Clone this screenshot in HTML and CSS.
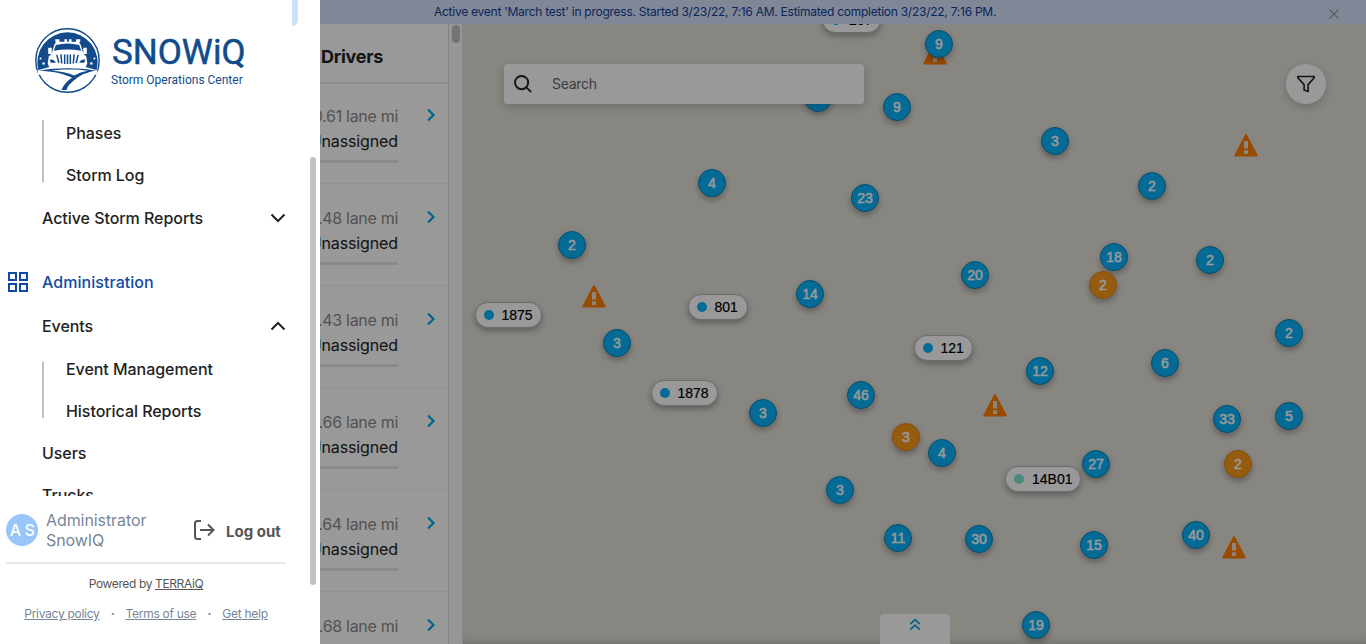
FILE: index.html
```html
<!DOCTYPE html>
<html lang="en">
<head>
<meta charset="utf-8">
<title>SNOWiQ</title>
<link rel="stylesheet" href="styles.css">
</head>
<body>
<svg width="0" height="0" class="defs">
  <symbol id="chev" viewBox="0 0 10 14"><path d="M2 1.500l5.500 5.500-5.500 5.500" fill="none" stroke="#00a5e5" stroke-width="2.200"/></symbol>
  <symbol id="warn" viewBox="0 0 24 23"><path d="M12 1.3L22.6 21.4H1.4z" fill="#ff7d00" stroke="#ff7d00" stroke-width="2.2" stroke-linejoin="round"/><path d="M10 7h4v7.6h-4zM10 16.2h4v3.8h-4z" fill="#e4e1d9"/></symbol>
</svg>
<div class="app">
  <header class="banner"><span>Active event 'March test' in progress. Started 3/23/22, 7:16 AM. Estimated completion 3/23/22, 7:16 PM.</span>
    <svg class="close" width="12" height="12" viewBox="0 0 12 12"><path d="M1.5 1.5l9 9m0-9l-9 9" stroke="#a5a39f" stroke-width="1.6"/></svg>
  </header>
  <div class="body">
    <section class="drivers">
      <h2>Drivers</h2>
      <div class="row first"><div class="info"><p class="mi">0.61 lane mi</p><p>Unassigned</p><i></i></div><svg width="10" height="14"><use href="#chev"/></svg></div>
      <div class="row"><div class="info"><p class="mi">0.48 lane mi</p><p>Unassigned</p><i></i></div><svg width="10" height="14"><use href="#chev"/></svg></div>
      <div class="row"><div class="info"><p class="mi">0.43 lane mi</p><p>Unassigned</p><i></i></div><svg width="10" height="14"><use href="#chev"/></svg></div>
      <div class="row"><div class="info"><p class="mi">0.66 lane mi</p><p>Unassigned</p><i></i></div><svg width="10" height="14"><use href="#chev"/></svg></div>
      <div class="row"><div class="info"><p class="mi">0.64 lane mi</p><p>Unassigned</p><i></i></div><svg width="10" height="14"><use href="#chev"/></svg></div>
      <div class="row"><div class="info"><p class="mi">0.68 lane mi</p></div><svg width="10" height="14"><use href="#chev"/></svg></div>
    </section>
    <div class="track"><div class="thumb"></div></div>
    <main class="map" id="map">
      <div class="search"><svg width="20" height="20" viewBox="0 0 20 20" fill="none" stroke="#222" stroke-width="1.9" stroke-linecap="round"><circle cx="8.6" cy="8.6" r="6.6"/><path d="M13.4 13.4l4.2 4.2"/></svg><span>Search</span></div>
      <div class="filter"><svg width="20" height="20" viewBox="0 0 20 20" fill="none" stroke="#222" stroke-width="1.6" stroke-linejoin="round"><path d="M1.8 2.5h16.4v1.2L12.1 10.6v7l-4-1.5v-5.500L1.8 3.7z"/></svg></div>
      <div class="tab"><svg width="12" height="13" viewBox="0 0 12 13" fill="none" stroke="#00a5e5" stroke-width="1.7"><path d="M1.3 6.2L6 1.6l4.7 4.6M1.3 11.7L6 7.1l4.7 4.6"/></svg></div>
    </main>
  </div>
</div>
<div class="overlay"></div>
<aside class="side">
  <div class="handle"></div>
  <div class="brand">
    <svg width="65" height="65" viewBox="0 0 64 64">
      <circle cx="32" cy="32" r="31.2" fill="#fff" stroke="#114b8b" stroke-width="1.4"/>
      <path d="M3.400 41.500A29.600 29.600 0 1 1 60.600 41.500z" fill="#114b8b"/>
      <path d="M19 16.500L21 13.500H43L45 16.500L47.500 25L50.500 28L51.500 35L50 38.500H14L12.500 35L13.500 28L16.500 25z" fill="#fff"/>
      <path d="M13 19.500h3.500v6H13zM47.500 19.500H51v6h-3.500zM20 11h4v3h-4zM29 11h2.500v3H29zM33.500 11H36v3h-2.500zM40.500 11h4v3h-4z" fill="#fff"/>
      <path d="M20.500 16.800Q32 13.800 43.500 16.800L45.500 22.300Q32 20 18.500 22.300z" fill="#114b8b"/>
      <path d="M21.500 26.500l2 8M25.500 26l.8 9M29.200 26v9.500M32 26v9.500M34.800 26v9.500M38.500 26l-.8 9M42.500 26.500l-2 8" stroke="#114b8b" stroke-width="1.500"/>
      <path d="M14.500 31.300q4-1 6 3h-5zM49.500 31.300q-4-1-6 3h5z" fill="#114b8b"/>
      <circle cx="5.500" cy="30" r="1" fill="#fff"/><circle cx="8.500" cy="35" r="1.200" fill="#fff"/><circle cx="58.500" cy="30" r="1" fill="#fff"/><circle cx="55.500" cy="35" r="1.200" fill="#fff"/>
      <path d="M2.500 41.800C13 38.500 20 37 32 37S51 38.500 61.500 41.800V46H2.500z" fill="#fff"/>
      <path d="M4 42C22 39 42 39 60 42C51 43.500 45 46 41 49.500C36 53.500 32.500 56 31 61H26C28.500 55.500 32 51.500 36.500 49C28 44.500 17 42.500 4 42z" fill="#114b8b"/>
      <path d="M16 42C26 40.400 42 40.400 52 42C46 43 42 44.800 38.500 46.800C32 43.800 25 42.300 16 42z" fill="#fff"/>
    </svg>
    <div class="words"><div class="name">SNOWiQ</div><div class="tag">Storm Operations Center</div></div>
  </div>
  <nav class="nav">
    <div class="sub one"><a>Phases</a><a>Storm Log</a></div>
    <a class="item active-reports">Active Storm Reports<svg width="16" height="10" viewBox="0 0 16 10"><path d="M1.500 1.500L8 8l6.500-6.500" fill="none" stroke="#222" stroke-width="2"/></svg></a>
    <a class="item admin"><svg width="20" height="20" viewBox="0 0 20 20" fill="none" stroke="#124aa3" stroke-width="2"><path d="M1 1h7v7H1zM12 1h7v7h-7zM1 12h7v7H1zM12 12h7v7h-7z"/></svg>Administration</a>
    <a class="item events">Events<svg width="16" height="10" viewBox="0 0 16 10"><path d="M1.500 8.500L8 2l6.500 6.500" fill="none" stroke="#222" stroke-width="2"/></svg></a>
    <div class="sub two"><a>Event Management</a><a>Historical Reports</a></div>
    <a class="item">Users</a>
    <a class="item">Trucks</a>
  </nav>
  <footer>
    <div class="user">
      <div class="avatar">A S</div>
      <div class="who">Administrator<br>SnowIQ</div>
      <svg class="exit" width="22" height="22" viewBox="0 0 22 22" fill="none" stroke="#555" stroke-width="2"><path d="M8 2H4.500A2.500 2.500 0 0 0 2 4.500v13A2.500 2.500 0 0 0 4.500 20H8M7 11h13M15 5.500l5.500 5.500-5.500 5.500"/></svg>
      <b>Log out</b>
    </div>
    <div class="powered">Powered by <u>TERRAiQ</u></div>
    <div class="links"><u>Privacy policy</u><span>·</span><u>Terms of use</u><span>·</span><u>Get help</u></div>
  </footer>
  <div class="sidebar-thumb"></div>
</aside>
<script src="map.js"></script>
</body>
</html>
```
FILE: styles.css
```css
* { box-sizing: border-box; margin: 0; }
body { width: 1366px; height: 644px; overflow: hidden; font-family: Inter, "Liberation Sans", sans-serif; font-size: 16px; color: #222; background: #fff; }
svg { display: block; flex: none; }
.defs { position: absolute; }
.app { height: 644px; display: flex; flex-direction: column; }
.banner { position: relative; z-index: 2; height: 24px; flex: none; background: #d5e2fa; color: #123f96; font-size: 12px; line-height: 24px; padding-left: 434px; display: flex; justify-content: space-between; align-items: center; white-space: nowrap; letter-spacing: -.255px; }
.close { margin: 4px 26px 0 0; }
.body { flex: 1; display: flex; min-height: 0; }
.drivers { width: 449px; border-right: 1px solid #dcdcdc; overflow: hidden; background: #fff; }
.drivers h2 { height: 60px; border-bottom: 2px solid #ececec; font-size: 18px; line-height: 66px; font-weight: 650; padding-left: 321px; letter-spacing: -.25px; }
.row { height: 102px; border-bottom: 1px solid #f0f0f0; display: flex; align-items: flex-start; padding: 22px 12px 0 0; }
.row.first { height: 100px; padding-top: 20px; }
.info { width: 398px; text-align: right; line-height: 25px; letter-spacing: -.12px; }
.info .mi { color: #8a8a8a; letter-spacing: -.3px; }
.info i { display: block; height: 3px; margin: 6px 0 0 158px; background: #e6e6e6; }
.row > svg { margin: 4px 0 0 28px; }
.track { width: 14px; background: #fafafa; border-right: 1px solid #e3e3e3; padding: 1px 2px 0 3px; }
.thumb { width: 8px; height: 18px; border-radius: 4px; background: #c1c1c1; }
.map { position: relative; flex: 1; overflow: hidden; background: #e3e0d8; box-shadow: inset 0 -10px 12px -10px rgba(0,0,0,.22); }
.search { position: absolute; z-index: 3; left: 41px; top: 40px; width: 360px; height: 40px; border-radius: 4px; background: #fff; display: flex; align-items: center; gap: 19px; padding: 0 0 1px 9px; font-size: 14px; letter-spacing: -.3px; color: #666; box-shadow: 0 3px 10px rgba(0,0,0,.2); }
.filter { position: absolute; z-index: 3; left: 823px; top: 40px; width: 40px; height: 40px; border-radius: 50%; background: #fff; display: grid; place-items: center; box-shadow: 0 3px 10px rgba(0,0,0,.2); }
.tab { position: absolute; left: 417px; bottom: 0; width: 70px; height: 30px; border-radius: 4px 4px 0 0; background: #fff; display: flex; justify-content: center; padding-top: 4px; }
.dot { position: absolute; width: 28px; height: 28px; border-radius: 50%; border: 1px solid #0a83b3; background: #06b3fb; color: #fff; font: 14px/26px "Liberation Sans", Arial, sans-serif; -webkit-text-stroke: .5px #fff; text-align: center; box-shadow: 0 3px 6px rgba(0,0,0,.3); }
.dot.orange { background: #f99a1c; border-color: #ef7f10; }
.pill { position: absolute; height: 26px; border-radius: 13px; border: 1px solid #b5b5b5; background: #fff; display: flex; align-items: center; gap: 8px; padding-left: 8px; font: 14px "Liberation Sans", Arial, sans-serif; color: #000; -webkit-text-stroke: .2px #000; box-shadow: 0 3px 6px rgba(0,0,0,.3); }
.pill i { width: 10px; height: 10px; border-radius: 50%; background: #06b3fb; }
.pill.teal i { background: #7fe3d0; }
.warn { position: absolute; }
.overlay { position: fixed; inset: 0; background: rgba(0,0,0,.4); z-index: 5; }
.side { position: fixed; left: 0; top: 0; z-index: 6; width: 320px; height: 644px; background: #fff; display: flex; flex-direction: column; }
.handle { position: absolute; left: 292px; top: 0; width: 6px; height: 26px; background: #cae3fb; border-radius: 0 0 6px 0; }
.brand { height: 112px; flex: none; display: flex; padding: 28px 0 0 35px; color: #114b8b; font-family: Roboto, sans-serif; }
.words { padding-left: 11px; }
.name { font-size: 35px; line-height: 40px; font-weight: 400; -webkit-text-stroke: .5px #114b8b; padding: 5px 0 0 1px; height: 44px; }
.tag { font-size: 12px; line-height: 16px; white-space: nowrap; }
.nav { height: 384px; flex: none; overflow: hidden; font-weight: 450; letter-spacing: -.05px; }
.nav a { display: flex; height: 42px; align-items: center; }
.sub { position: relative; padding-left: 66px; }
.sub::before { content: ""; position: absolute; left: 42px; width: 2px; background: #c1c1c1; }
.one::before { top: 8px; height: 62px; }
.two::before { top: 14px; height: 56px; }
.item { padding: 0 34px 0 42px; justify-content: space-between; }
.active-reports { margin-top: 1px; }
.nav .admin { margin-top: 22px; padding-left: 8px; color: #124aa3; justify-content: flex-start; gap: 14px; letter-spacing: .05px; }
.nav .events { margin: 2px 0 1px; }
footer { flex: 1; padding: 0 34px 0 6px; }
.user { height: 68px; padding-top: 2px; border-bottom: 2px solid #e8e8e8; display: flex; align-items: center; color: #768698; }
.avatar { width: 32px; height: 32px; border-radius: 50%; background: #98c6f8; color: #fff; line-height: 32px; text-align: center; font-weight: 500; letter-spacing: -.4px; }
.who { line-height: 20px; margin-left: 8px; width: 147px; letter-spacing: -.08px; }
.user b { margin: 2px 0 0 11px; color: #555; font-size: 15px; font-weight: 650; white-space: nowrap; }
.powered { text-align: center; font-size: 12px; line-height: 16px; padding-top: 12px; color: #555; letter-spacing: -.38px; }
.links { display: flex; justify-content: center; font-size: 12px; line-height: 16px; padding-top: 14px; color: #768698; letter-spacing: -.28px; }
.links span { width: 26px; text-align: center; font-weight: 700; }
.sidebar-thumb { position: absolute; left: 310px; top: 157px; width: 6px; height: 428px; border-radius: 3px; background: #c1c1c1; }
```
FILE: map.js
```js
// Marker centres in page coordinates; the map begins at (463, 24).
const map = document.getElementById('map');
const put = (html) => map.insertAdjacentHTML('beforeend', html);
const X = 463, Y = 24;

[[934.5,54],[1246,146],[594,297],[995,406],[1233.5,548]].forEach(([x, y]) =>
  put(`<svg class="warn" width="24" height="23" style="left:${x - 12 - X}px;top:${y - 12 - Y}px"><use href="#warn"/></svg>`));

[[939,44,9],[897,107,9],[818,98,7],[1055,141,3],[712,183,4],[865,198,23],[1152,186,2],[572,245,2],[1114,257,18],
 [1210,260,2],[975,275,20],[810,294,14],[617,343,3],[1289,333,2],[1165,363,6],[1040,371,12],[861,395,46],[763,413,3],
 [1227,419,33],[1289,416,5],[942,453,4],[1096,464,27],[840,490,3],[898,538,11],[979,539,30],[1094,545,15],
 [1196,535,40],[1036,625,19],[1103,285,2,1],[906,437,3,1],[1238,464,2,1]].forEach(([x, y, n, o]) =>
  put(`<div class="dot${o ? ' orange' : ''}" style="left:${x - 14 - X}px;top:${y - 14 - Y}px">${n}</div>`));

[[822,20,59,'267'],[474.5,315,67,'1875'],[687.5,307,60,'801'],[913.5,348,59,'121'],[650.5,393,67,'1878'],[1005,479,76,'14B01',1]].forEach(([x, y, w, t, g]) =>
  put(`<div class="pill${g ? ' teal' : ''}" style="left:${x - X}px;top:${y - 13 - Y}px;width:${w}px"><i></i>${t}</div>`));
```
